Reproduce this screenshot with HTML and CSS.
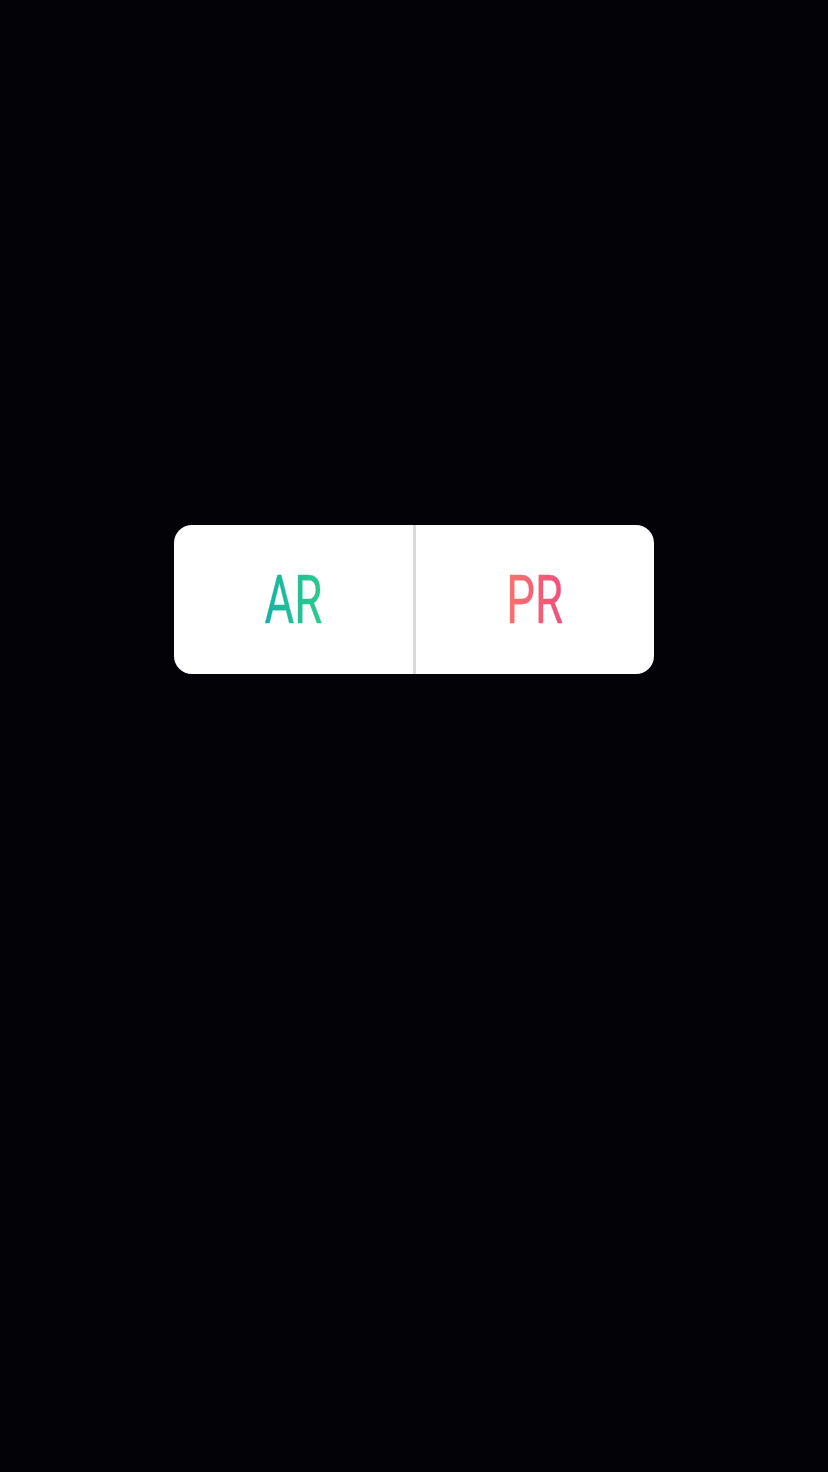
FILE: index.html
```html
<!DOCTYPE html>
<html>
<head>
<meta charset="utf-8">
<link rel="stylesheet" href="styles.css">
</head>
<body>
<div class="screen">
  <div class="poll">
    <div class="option"><span class="label ar">AR</span></div>
    <div class="divider"></div>
    <div class="option"><span class="label pr">PR</span></div>
  </div>
</div>
</body>
</html>
```
FILE: styles.css
```css
html, body {
  margin: 0;
  padding: 0;
  background: #020205;
}
.screen {
  width: 828px;
  height: 1472px;
  box-sizing: border-box;
  padding-top: 525px;
  display: flex;
  justify-content: center;
  align-items: flex-start;
  background: #030307;
}
.poll {
  width: 480px;
  height: 149px;
  background: #ffffff;
  border-radius: 18px;
  display: flex;
  overflow: hidden;
}
.option {
  flex: 1;
  display: flex;
  align-items: center;
  justify-content: center;
}
.divider {
  width: 3px;
  background: #d9d9d9;
}
.label {
  font-family: "Roboto", "Liberation Sans", sans-serif;
  font-weight: 400;
  font-size: 67px;
  line-height: 1;
  display: inline-block;
  transform: scaleX(0.68);
  -webkit-background-clip: text;
  background-clip: text;
  color: transparent;
  -webkit-text-stroke: 0.4px currentColor;
  margin-top: 2px;
}
.ar {
  background-image: linear-gradient(90deg, #15b3a3 0%, #2ccb8c 100%);
}
.pr {
  background-image: linear-gradient(90deg, #f7736c 0%, #ef4f7d 100%);
}
```
